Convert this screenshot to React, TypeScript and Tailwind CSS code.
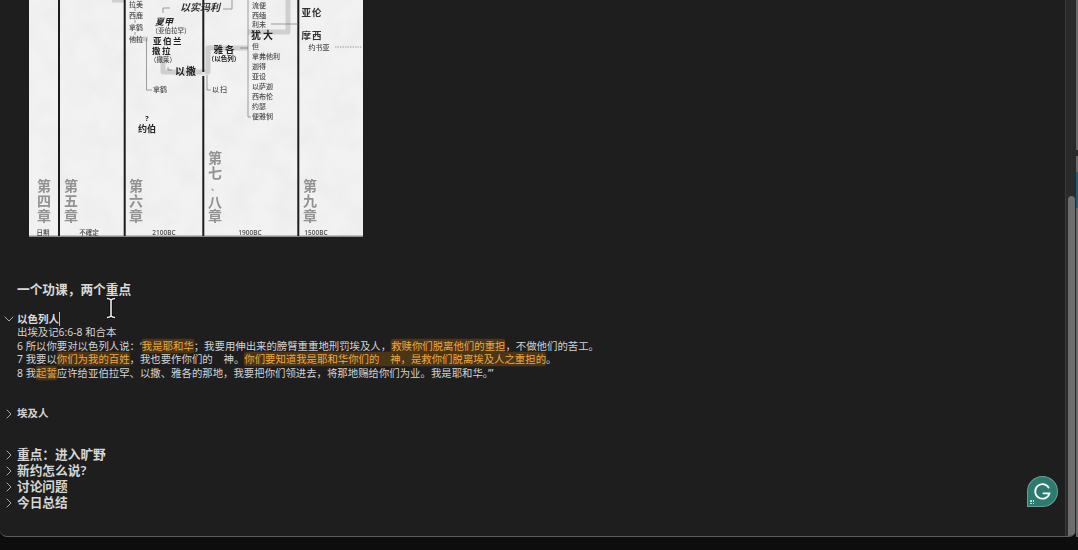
import React from "react";
import { ChevronDown, ChevronRight } from "lucide-react";

const CJK = "font-['Noto_Sans','Noto_Sans_CJK_SC',sans-serif]";

type LabelProps = { x: number; y: number; size?: number; weight?: number; fill?: string; italic?: boolean; anchor?: "start" | "middle"; spacing?: number; children: string };

function Label({ x, y, size = 7, weight = 500, fill = "#4a4a4a", italic, anchor = "middle", spacing, children }: LabelProps) {
  return (
    <text x={x} y={y} fontSize={size} fontWeight={weight} fill={fill} fontStyle={italic ? "italic" : undefined} textAnchor={anchor} dominantBaseline="central" letterSpacing={spacing}>
      {children}
    </text>
  );
}

const TRIBES: [string, number][] = [
  ["流便", 5], ["西缅", 15], ["利未", 24.5], ["但", 46], ["拿弗他利", 56], ["迦得", 66],
  ["亚设", 76], ["以萨迦", 86], ["西布伦", 96], ["约瑟", 106], ["便雅悯", 116],
];

const CHAPTERS: [number, string[]][] = [[44, ["第", "四", "章"]], [71, ["第", "五", "章"]], [136, ["第", "六", "章"]], [310, ["第", "九", "章"]]];

const DATES: [number, string][] = [[43, "日期"], [89, "不確定"], [164, "2100BC"], [250, "1900BC"], [316, "1500BC"]];

function Genealogy() {
  return (
    <svg viewBox="29 0 334 237" className={`block h-[237px] w-[334px] ${CJK}`}>
      <defs>
        <filter id="paper" x="0" y="0" width="100%" height="100%">
          <feTurbulence type="fractalNoise" baseFrequency="0.04" numOctaves="4" seed="7" />
          <feColorMatrix values="0 0 0 0 0.82  0 0 0 0 0.82  0 0 0 0 0.82  1.3 0 0 0 -0.45" />
        </filter>
        <filter id="soft"><feGaussianBlur stdDeviation="0.32" /></filter>
      </defs>
      <rect x="29" y="0" width="334" height="237" fill="#f2f2f2" />
      <rect x="29" y="0" width="334" height="236" filter="url(#paper)" />
      <rect x="29" y="235.5" width="334" height="1.5" fill="#8d8d8d" />
      <g filter="url(#soft)">
        {/* highlighted lineage */}
        <g fill="none" stroke="#cfcfcf" strokeWidth="5" strokeLinejoin="round">
          <path d="M112 0H125" />
          <path d="M132 39H148" />
          <path d="M163 56V72H208V48H248" />
          <path d="M248 32H288V0" />
        </g>
        {[59, 124.7, 203.3, 298.3].map((x) => (
          <rect key={x} x={x - 1} y="0" width="2" height="236" fill="#1c1c1c" />
        ))}
        <rect x="202" y="72" width="3" height="4" fill="#e6e6e6" />
        {/* connectors */}
        <g fill="none" stroke="#777" strokeWidth="0.7">
          <path d="M163 13V8H170M223 9H232V0" />
          <path d="M146.5 38V90H152M207 75V90H211" />
          <path d="M248 0V117H251M271 24H298M240 48H248M168 67V70H172" />
          <path d="M335 47H362" strokeDasharray="1.5 1" />
          <path d="M135 8V11M135 20V23M135 32V35" />
        </g>
        <Label x={200} y={7} size={10} weight={700} italic fill="#333">以实玛利</Label>
        <Label x={136} y={4}>拉美</Label>
        <Label x={136} y={15}>西鹿</Label>
        <Label x={136} y={27}>拿鹤</Label>
        <Label x={136} y={39}>他拉</Label>
        <Label x={164} y={21} size={9} weight={700} italic fill="#222">夏甲</Label>
        <Label x={171} y={30.5} size={6.5}>（亚伯拉罕）</Label>
        <Label x={168} y={40.5} size={8.5} weight={700} fill="#222" spacing={1.5}>亚伯兰</Label>
        <Label x={162} y={50} size={8.5} weight={700} fill="#222" spacing={1.5}>撒拉</Label>
        <Label x={163} y={59} size={6.5}>（撒莱）</Label>
        <Label x={186} y={70.5} size={10} weight={700} fill="#222" spacing={1}>以撒</Label>
        <Label x={160} y={89.5}>拿鹤</Label>
        <Label x={220} y={89.5} spacing={1}>以扫</Label>
        <Label x={225} y={49.5} size={9.5} weight={700} fill="#222" spacing={2}>雅各</Label>
        <Label x={224} y={58.5} size={6.5} weight={700} fill="#222">（以色列）</Label>
        {TRIBES.map(([name, y]) => (
          <Label key={name} x={252} y={y} anchor="start">{name}</Label>
        ))}
        <Label x={263} y={35} size={10} weight={700} fill="#222" spacing={2}>犹大</Label>
        <Label x={312} y={12} size={9.5} weight={700} fill="#333" spacing={1}>亚伦</Label>
        <Label x={312} y={35} size={9.5} weight={700} fill="#333" spacing={1}>摩西</Label>
        <Label x={319} y={47}>约书亚</Label>
        <Label x={147} y={118} size={7} weight={700} fill="#222">?</Label>
        <Label x={147} y={128} size={9} weight={700} fill="#222">约伯</Label>
        {CHAPTERS.map(([x, chars]) =>
          chars.map((c, i) => (
            <Label key={x + c} x={x} y={185 + i * 15} size={14} weight={700} fill="#929292">{c}</Label>
          )),
        )}
        <Label x={215} y={157} size={14} weight={700} fill="#929292">第</Label>
        <Label x={215} y={172} size={14} weight={700} fill="#929292">七</Label>
        <Label x={215} y={186} size={8} weight={700} fill="#929292">、</Label>
        <Label x={215} y={201} size={14} weight={700} fill="#929292">八</Label>
        <Label x={215} y={215.5} size={14} weight={700} fill="#929292">章</Label>
        {DATES.map(([x, t]) => (
          <Label key={t} x={x} y={232} size={6.5} fill="#444">{t}</Label>
        ))}
      </g>
    </svg>
  );
}

function Mark({ children }: { children: string }) {
  return <span className="rounded-[2px] bg-[#4a3518] text-[#eeaa40] shadow-[0_0_2px_#4a3518]">{children}</span>;
}

function Toggle({ label, big }: { label: string; big?: boolean }) {
  return (
    <div className="flex h-4 items-center">
      <ChevronRight className="ml-[1px] shrink-0 text-[#a8a8a8]" size={16} strokeWidth={1.5} />
      <span className={`font-semibold text-[#d6d6d6] ${big ? "text-[12.7px]" : "text-[10.5px]"}`}>{label}</span>
    </div>
  );
}

function IBeam() {
  return (
    <svg viewBox="0 0 12 22" className="absolute left-[105px] top-[297px] h-[22px] w-[12px]">
      <path d="M2 1.5C4 1.5 5 2 6 3C7 2 8 1.5 10 1.5M6 3V19M2 20.5C4 20.5 5 20 6 19C7 20 8 20.5 10 20.5" fill="none" stroke="#111" strokeWidth="3.8" />
      <path d="M2 1.5C4 1.5 5 2 6 3C7 2 8 1.5 10 1.5M6 3V19M2 20.5C4 20.5 5 20 6 19C7 20 8 20.5 10 20.5" fill="none" stroke="#eee" strokeWidth="1.6" />
    </svg>
  );
}

function GrammarlyBadge() {
  return (
    <div className="absolute left-[1027px] top-[476px] flex h-[31px] w-[31px] items-center justify-center rounded-full rounded-bl-[3px] border border-[#6f9d95] bg-[#2a7c6f]">
      <svg viewBox="0 0 24 24" className="h-[21px] w-[21px]">
        <path d="M19 7.5A8.3 8.3 0 1 0 20 14H13" fill="none" stroke="#fff" strokeWidth="2" strokeLinecap="round" />
      </svg>
      <div className="absolute bottom-[2px] left-[2px] grid grid-cols-2 gap-[1px]">
        {[0, 1, 2, 3].map((i) => (
          <span key={i} className="h-[1.5px] w-[1.5px] bg-[#bfe0d9]" />
        ))}
      </div>
    </div>
  );
}

export default function App() {
  return (
    <div className={`relative h-[550px] w-[1078px] overflow-hidden bg-[#0d0d0d] ${CJK}`}>
      <div className="flex h-[537px]">
        <div className="flex w-[1076px] overflow-hidden rounded-b-[7px] border-b border-[#5c5c5c] bg-[#1e1e1e]">
          <main className="min-w-0 flex-1">
            <div className="ml-[29px]">
              <Genealogy />
            </div>
            <h2 className="ml-[17px] mt-[43px] h-[18px] text-[12.7px] leading-[18px] font-semibold text-[#d9d9d9]">一个功课，两个重点</h2>
            <div className="mt-[14px] flex h-[14px] items-center">
              <ChevronDown className="ml-[1px] shrink-0 text-[#a8a8a8]" size={16} strokeWidth={1.5} />
              <span className="border-r border-[#e8c34a] text-[10.5px] leading-[14px] font-semibold text-[#dcdcdc]">以色列人</span>
            </div>
            <div className="ml-[17px] text-[10.4px] leading-[13.7px] whitespace-pre text-[#d4d4d4]">
              <p>出埃及记6:6-8 和合本</p>
              <p>6 所以你要对以色列人说：‘<Mark>我是耶和华</Mark>；我要用伸出来的膀臂重重地刑罚埃及人，<Mark>救赎你们脱离他们的重担</Mark>，不做他们的苦工。</p>
              <p>7 我要以<Mark>你们为我的百姓</Mark>，我也要作你们的    神。<Mark>你们要知道我是耶和华你们的    神，是救你们脱离埃及人之重担的</Mark>。</p>
              <p>8 我<Mark>起誓</Mark>应许给亚伯拉罕、以撒、雅各的那地，我要把你们领进去，将那地赐给你们为业。我是耶和华。’”</p>
            </div>
            <div className="mt-[25px]">
              <Toggle label="埃及人" />
            </div>
            <div className="mt-[25px]">
              <Toggle label="重点：进入旷野" big />
              <Toggle label="新约怎么说?" big />
              <Toggle label="讨论问题" big />
              <Toggle label="今日总结" big />
            </div>
          </main>
          <aside className="flex w-[11px] shrink-0 flex-col justify-end border-l border-[#3a3a3a] bg-[#2a2a2a] pl-[2px] pr-[1px]">
            <div className="h-[340px] rounded-t-[4px] bg-[#6d6d6d]" />
          </aside>
        </div>
        <div className="flex w-[2px] flex-col bg-[#6a6a6a]">
          <div className="mt-[150px] h-[6px] bg-[#2b2b2b]" />
          <div className="mt-[16px] h-[36px] bg-[#245e6e]" />
        </div>
      </div>
      <IBeam />
      <GrammarlyBadge />
    </div>
  );
}
